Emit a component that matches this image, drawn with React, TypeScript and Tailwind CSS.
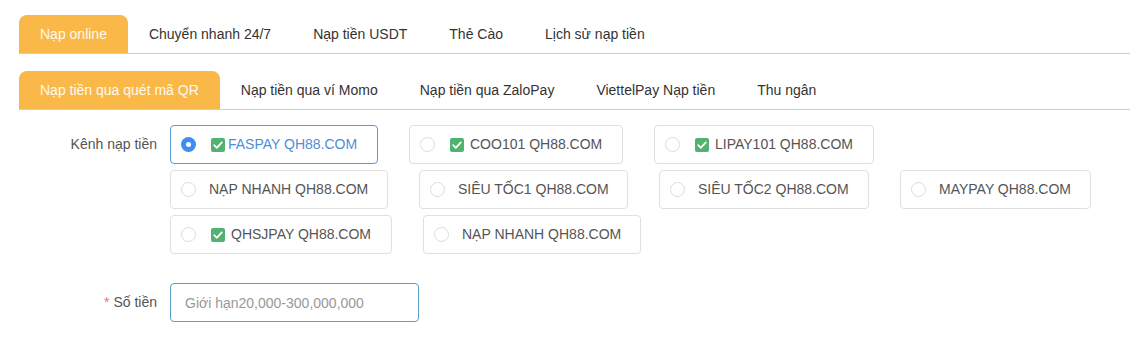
import React from 'react';

const TOP_TABS = ['Nạp online', 'Chuyển nhanh 24/7', 'Nạp tiền USDT', 'Thẻ Cào', 'Lịch sử nạp tiền'];
const SUB_TABS = [
  'Nạp tiền qua quét mã QR',
  'Nạp tiền qua ví Momo',
  'Nạp tiền qua ZaloPay',
  'ViettelPay Nạp tiền',
  'Thu ngân',
];

interface Channel {
  label: string;
  width: string;
  check?: boolean;
  tight?: boolean;
}

const CHANNELS: Channel[] = [
  { label: 'FASPAY QH88.COM', width: 'w-[208px]', check: true, tight: true },
  { label: 'COO101 QH88.COM', width: 'w-[214px]', check: true },
  { label: 'LIPAY101 QH88.COM', width: 'w-[220px]', check: true },
  { label: 'NẠP NHANH QH88.COM', width: 'w-[218px]' },
  { label: 'SIÊU TỐC1 QH88.COM', width: 'w-[209px]' },
  { label: 'SIÊU TỐC2 QH88.COM', width: 'w-[210px]' },
  { label: 'MAYPAY QH88.COM', width: 'w-[191px]' },
  { label: 'QHSJPAY QH88.COM', width: 'w-[222px]', check: true },
  { label: 'NẠP NHANH QH88.COM', width: 'w-[218px]' },
];

function GreenCheck() {
  return (
    <svg width="14" height="14" viewBox="0 0 14 14" className="shrink-0">
      <rect x="0" y="0" width="14" height="14" rx="2" fill="#52b26f" />
      <path d="M3.2 7.2 L5.8 9.8 L10.8 4.4" fill="none" stroke="#ffffff" strokeWidth="1.7" strokeLinecap="round" strokeLinejoin="round" />
    </svg>
  );
}

function Tabs({ items, active }: { items: string[]; active: number }) {
  return (
    <div className="flex border-b border-[#e6cf89]">
      {items.map((t, i) => (
        <div
          key={t}
          className={`flex h-[38px] items-center px-[21px] text-[14px] ${
            i === active ? 'rounded-t-[8px] bg-[#f9b847] text-[#fffaf0]' : 'text-[#333333]'
          }`}
        >
          {t}
        </div>
      ))}
    </div>
  );
}

export default function App() {
  const selected = 0;

  return (
    <div className="min-h-screen bg-white pl-[19px] pr-[16px] pt-[15px] font-['Liberation_Sans',Arial,sans-serif]">
      <Tabs items={TOP_TABS} active={0} />
      <div className="mt-[17px]">
        <Tabs items={SUB_TABS} active={0} />
      </div>

      {/* Channel picker */}
      <div className="mt-[15px] flex">
        <div className="flex h-[39px] w-[151px] shrink-0 items-center justify-end pr-[13px] text-[14px] text-[#555555]">
          Kênh nạp tiền
        </div>
        <div className="flex w-[930px] flex-wrap gap-x-[31px] gap-y-[6px]">
          {CHANNELS.map((c, i) => {
            const on = i === selected;
            return (
              <div
                key={i}
                className={`flex h-[39px] items-center rounded-[4px] border pl-[10px] ${c.width} ${
                  on ? 'border-[#5b9ad6]' : 'border-[#e0e0e0]'
                }`}
              >
                {on ? (
                  <span className="flex h-[15px] w-[15px] shrink-0 items-center justify-center rounded-full bg-[#3d8ef0]">
                    <span className="h-[5px] w-[5px] rounded-full bg-white" />
                  </span>
                ) : (
                  <span className="h-[15px] w-[15px] shrink-0 rounded-full border border-[#dcdcdc]" />
                )}
                <span
                  className={`ml-[13px] flex items-center whitespace-nowrap text-[14px] ${
                    on ? 'text-[#4d8fd6]' : 'text-[#555555]'
                  }`}
                >
                  {c.check && (
                    <span className={`ml-[2px] flex ${c.tight ? 'mr-[3px]' : 'mr-[6px]'}`}>
                      <GreenCheck />
                    </span>
                  )}
                  {c.label}
                </span>
              </div>
            );
          })}
        </div>
      </div>

      {/* Amount */}
      <div className="mt-[29px] flex">
        <div className="flex h-[39px] w-[151px] shrink-0 items-center justify-end pr-[13px] text-[14px] text-[#555555]">
          <span className="mr-[4px] text-[#f56c6c]">*</span>
          Số tiền
        </div>
        <input
          type="text"
          placeholder="Giới hạn20,000-300,000,000"
          className="h-[39px] w-[249px] rounded-[4px] border border-[#5d9fc2] px-[14px] text-[14px] text-[#555555] outline-none placeholder:text-[#999999]"
        />
      </div>
    </div>
  );
}
